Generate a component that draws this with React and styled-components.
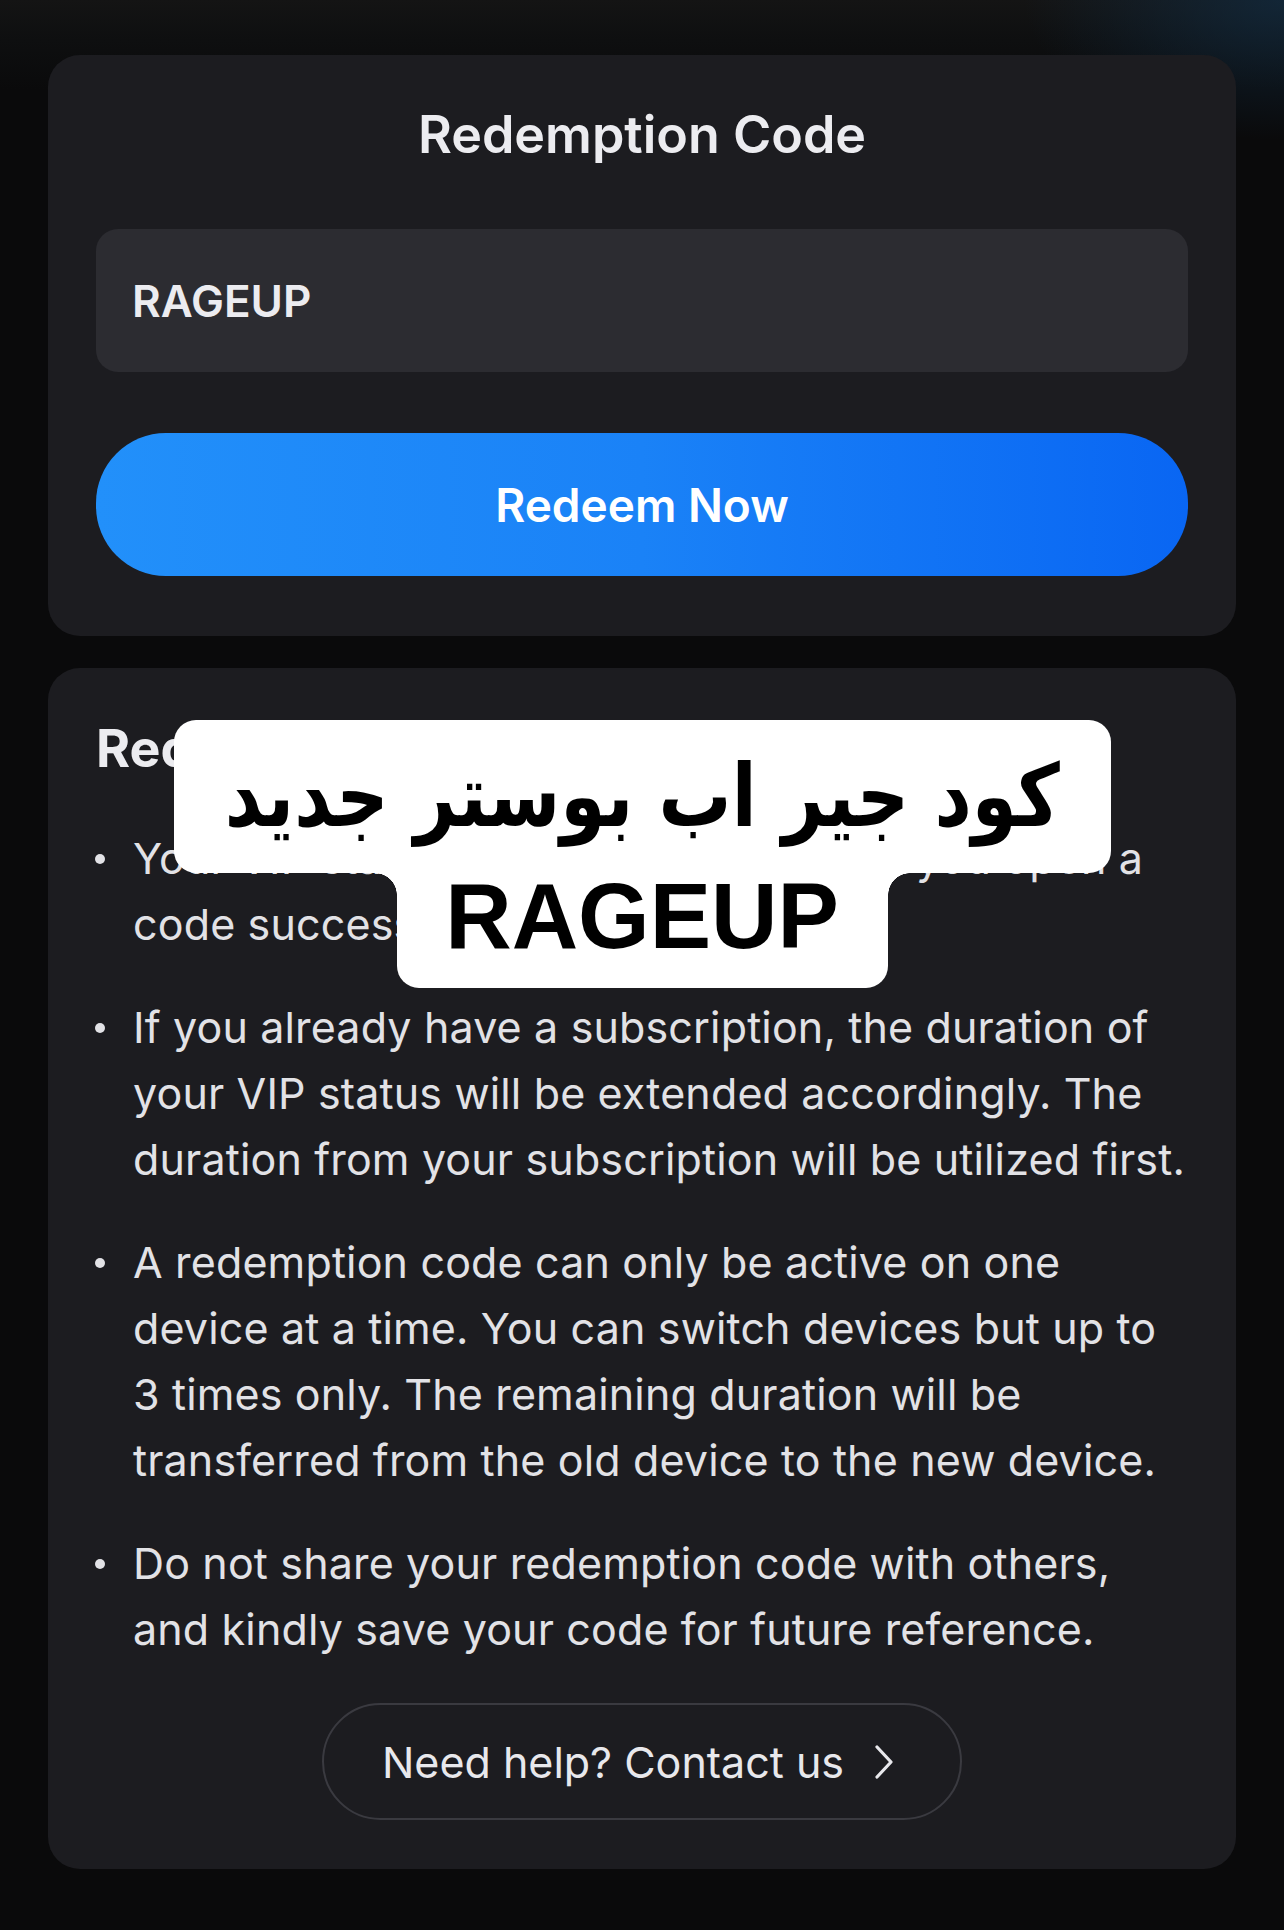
import React from 'react'
import styled, { createGlobalStyle } from 'styled-components'

const GlobalStyle = createGlobalStyle`
    html, body {
        margin: 0;
        padding: 0;
    }

    body {
        min-height: 1930px;
        background:
            radial-gradient(ellipse 260px 140px at 100% 0, rgba(18, 44, 66, 0.75), transparent),
            linear-gradient(180deg, #141414 0, #0e0f10 40px, #0a0a0b 90px);
        background-color: #0a0a0b;
        font-family: 'Inter', 'Noto Sans', sans-serif;
        color: #e8e8ec;
    }
`

const Page = styled.div`
    display: flex;
    flex-direction: column;
    gap: 32px;
    padding: 55px 48px 60px;
`

const Card = styled.section`
    position: relative;
    display: flex;
    flex-direction: column;
    background: #1c1c20;
    border-radius: 32px;
    padding: 49px 48px ${p => p.$bottom || 60}px;
`

const Title = styled.h1`
    margin: 0;
    text-align: center;
    font-size: 52px;
    line-height: 61px;
    font-weight: 600;
    color: #ececf0;
`

const CodeInput = styled.div`
    display: flex;
    align-items: center;
    height: 143px;
    margin-top: 64px;
    padding: 0 36px;
    background: #2c2c31;
    border-radius: 22px;
    font-size: 44px;
    font-weight: 600;
    color: #ececf0;
`

const RedeemButton = styled.button`
    display: flex;
    align-items: center;
    justify-content: center;
    width: 100%;
    height: 143px;
    margin-top: 61px;
    border: none;
    border-radius: 70px;
    background: linear-gradient(90deg, #2290fa 0%, #1a82f7 50%, #0966f3 100%);
    font-family: 'Inter', sans-serif;
    font-size: 46px;
    font-weight: 600;
    color: #fff;
`

const Heading = styled.h2`
    margin: 0;
    font-size: 52px;
    line-height: 63px;
    font-weight: 700;
    color: #ececf0;
`

const Notes = styled.ul`
    list-style: none;
    margin: 45px 0 0;
    padding: 0;
    display: flex;
    flex-direction: column;
    gap: 37px;
`

const Note = styled.li`
    display: flex;
    font-size: 43px;
    line-height: 66px;
    letter-spacing: 0.15px;
    color: #e2e2e6;
`

const Bullet = styled.span`
    flex: 0 0 37px;
    display: flex;
    align-items: flex-start;
    padding-top: 29px;
    height: 66px;
    box-sizing: border-box;

    &::before {
        content: '';
        width: 10px;
        height: 10px;
        margin-left: -1px;
        border-radius: 50%;
        background: #e2e2e6;
    }
`

const ContactButton = styled.button`
    display: flex;
    align-items: center;
    gap: 30px;
    align-self: center;
    height: 117px;
    margin-top: 41px;
    padding: 0 66px 0 58px;
    background: transparent;
    border: 2px solid #3a3a40;
    border-radius: 60px;
    font-family: 'Inter', sans-serif;
    font-size: 43px;
    color: #e8e8ec;
`

/* caption sticker laid over the notes card */
const Sticker = styled.div`
    position: absolute;
    top: 52px;
    left: 0;
    right: 0;
    display: flex;
    flex-direction: column;
    align-items: center;
`

const StickerLine = styled.div`
    position: relative;
    display: flex;
    align-items: center;
    justify-content: center;
    box-sizing: border-box;
    width: ${p => p.$width}px;
    height: ${p => p.$height}px;
    background: #fff;
    color: #000;
    border-radius: ${p => (p.$joined ? '0 0 22px 22px' : '22px')};

    ${p => p.$joined && `
        &::before, &::after {
            content: '';
            position: absolute;
            top: 0;
            width: 22px;
            height: 22px;
        }
        &::before {
            left: -22px;
            background: radial-gradient(circle at 0 100%, transparent 21.5px, #fff 22px);
        }
        &::after {
            right: -22px;
            background: radial-gradient(circle at 100% 100%, transparent 21.5px, #fff 22px);
        }
    `}
`

const ArabicText = styled.span`
    direction: rtl;
    white-space: nowrap;
    font-family: 'DejaVu Sans', sans-serif;
    font-weight: 700;
    font-size: 72px;
    line-height: 1;
    padding-top: 4px;
    transform: scale(1.01, 1.2);
    transform-origin: 50% 70%;
`

const CodeText = styled.span`
    font-family: 'Liberation Sans', Arial, sans-serif;
    font-weight: 700;
    font-size: 92px;
    line-height: 86px;
    align-self: flex-start;
`

const Chevron = () => (
    <svg width="20" height="34" viewBox="0 0 20 34" fill="none">
        <polyline points="3,2 17,17 3,32" stroke="#e8e8ec" strokeWidth="3.2" strokeLinecap="round" strokeLinejoin="round" />
    </svg>
)

const notes = [
    'Your VIP status becomes active when you open a code successfully.',
    'If you already have a subscription, the duration of your VIP status will be extended accordingly. The duration from your subscription will be utilized first.',
    'A redemption code can only be active on one device at a time. You can switch devices but up to 3 times only. The remaining duration will be transferred from the old device to the new device.',
    'Do not share your redemption code with others, and kindly save your code for future reference.',
]

const App = () => {
    return (
        <>
            <GlobalStyle />
            <Page>
                <Card>
                    <Title>Redemption Code</Title>
                    <CodeInput>RAGEUP</CodeInput>
                    <RedeemButton>Redeem Now</RedeemButton>
                </Card>

                <Card $bottom={49}>
                    <Heading>Redemption Instructions</Heading>
                    <Notes>
                        {notes.map(text => (
                            <Note key={text}>
                                <Bullet />
                                <span>{text}</span>
                            </Note>
                        ))}
                    </Notes>
                    <ContactButton>
                        Need help? Contact us
                        <Chevron />
                    </ContactButton>

                    <Sticker>
                        <StickerLine $width={937} $height={153}>
                            <ArabicText>كود جير اب بوستر جديد</ArabicText>
                        </StickerLine>
                        <StickerLine $width={491} $height={115} $joined>
                            <CodeText>RAGEUP</CodeText>
                        </StickerLine>
                    </Sticker>
                </Card>
            </Page>
        </>
    )
}

export default App
